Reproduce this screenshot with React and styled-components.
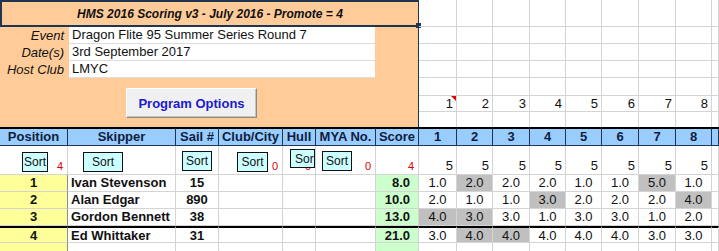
import React from "react";
import styled, { createGlobalStyle } from "styled-components";

const GlobalStyle = createGlobalStyle`
  html, body {
    margin: 0;
    padding: 0;
    background: #fff;
  }
  body {
    font-family: "Liberation Sans", Arial, sans-serif;
    color: #111;
  }
  * {
    box-sizing: border-box;
  }
`;

const COLS =
  "68px 108px 43px 64px 33px 60px 43px 38px 36px 37px 36px 36px 37px 37px 36px 1fr";
const RACE_COLS = "38px 36px 37px 36px 36px 37px 37px 36px 1fr";

const GRID = "#d4d4d4";
const NAVY = "#1f3550";

const Sheet = styled.div`
  width: 719px;
  height: 251px;
  overflow: hidden;
  background: #fff;
`;

const Top = styled.div`
  display: flex;
  height: 127px;
`;

const Panel = styled.div`
  width: 419px;
  flex: none;
  background: #ffcc99;
  border-right: 1px solid ${NAVY};
`;

const Title = styled.div`
  height: 27px;
  border: 2px solid ${NAVY};
  border-right: none;
  display: flex;
  align-items: center;
  justify-content: center;
  font-style: italic;
  font-weight: bold;
  font-size: 12px;
  position: relative;

  &::after {
    content: "";
    position: absolute;
    right: -3px;
    bottom: -3px;
    width: 5px;
    height: 5px;
    background: ${NAVY};
  }
`;

const Info = styled.div`
  display: grid;
  grid-template-columns: 69px 306px;
  grid-auto-rows: 17px;
`;

const Label = styled.div`
  text-align: right;
  padding-right: 5px;
  font-style: italic;
  font-size: 13px;
  line-height: 17px;
`;

const Value = styled.div`
  background: #fff;
  border-bottom: 1px solid #dcdcdc;
  font-size: 13px;
  line-height: 16px;
  padding-left: 3px;
`;

const ButtonRow = styled.div`
  padding: 10px 0 0 126px;
`;

const OptionsButton = styled.button`
  width: 131px;
  height: 30px;
  padding: 0;
  background: #f0f0f0;
  border: 1px solid;
  border-color: #fff #8a8a8a #8a8a8a #fff;
  box-shadow: inset -1px -1px 0 #c4c4c4;
  font-family: "Liberation Sans", Arial, sans-serif;
  font-weight: bold;
  font-size: 13px;
  color: #1a1ad2;
`;

const RightGrid = styled.div`
  flex: 1;
  display: grid;
  grid-template-columns: ${RACE_COLS};
  grid-template-rows: 27px 17px 17px 17px 18px 16px 15px;
`;

const GridCell = styled.div`
  position: relative;
  border-right: 1px solid ${GRID};
  border-bottom: ${(p) => (p.$last ? "none" : `1px solid ${GRID}`)};
  font-size: 13px;
  line-height: 16px;
  text-align: right;
  padding-right: 3px;
`;

const CommentMark = styled.span`
  position: absolute;
  top: 0;
  right: 0;
  width: 0;
  height: 0;
  border-top: 5px solid #e00000;
  border-left: 5px solid transparent;
`;

const Table = styled.div`
  display: grid;
  grid-template-columns: ${COLS};
  grid-template-rows: 19px 29px 17px 17px 17px 17px 17px;
`;

const HeadCell = styled.div`
  background: #99ccff;
  border-top: 2px solid #000;
  border-bottom: 1px solid ${NAVY};
  border-right: 1px solid ${NAVY};
  color: #0f1d3d;
  font-weight: bold;
  font-size: 13px;
  line-height: 16px;
  text-align: center;
  white-space: nowrap;
  overflow: hidden;
`;

const SortCell = styled.div`
  position: relative;
  display: flex;
  justify-content: flex-end;
  align-items: flex-end;
  padding: 0 ${(p) => (p.$race ? 3 : 4)}px 1px 0;
  border-right: 1px solid ${GRID};
  border-bottom: 1px solid ${GRID};
  font-size: 13px;
`;

const Count = styled.span`
  color: #e00000;
  font-size: 11px;
  line-height: 13px;
`;

const SortButton = styled.div`
  position: absolute;
  left: ${(p) => p.$left}px;
  top: ${(p) => p.$top}px;
  width: ${(p) => p.$w}px;
  height: ${(p) => p.$h}px;
  background: #ccffff;
  border: 1px solid #111;
  display: flex;
  align-items: center;
  justify-content: ${(p) => (p.$clip ? "flex-start" : "center")};
  padding-left: ${(p) => (p.$clip ? 4 : 0)}px;
  overflow: hidden;
  white-space: nowrap;
  font-size: 12px;
  color: #111;
`;

const tones = {
  yellow: "#ffff99",
  green: "#ccffcc",
  gray: "#c0c0c0",
  white: "#fff",
};

const DataCell = styled.div`
  background: ${(p) => tones[p.$tone || "white"]};
  border-right: 1px solid ${(p) => p.$edge || GRID};
  border-bottom: 1px solid ${GRID};
  border-top: ${(p) => (p.$thick ? "2px solid #000" : "none")};
  font-size: 13px;
  line-height: 16px;
  font-weight: ${(p) => (p.$bold ? "bold" : "normal")};
  text-align: ${(p) => p.$align || "center"};
  padding: ${(p) => p.$pad || "0"};
  white-space: nowrap;
  overflow: hidden;
`;

const headers = [
  "Position",
  "Skipper",
  "Sail #",
  "Club/City",
  "Hull",
  "MYA No.",
  "Score",
  "1",
  "2",
  "3",
  "4",
  "5",
  "6",
  "7",
  "8",
  "",
];

const sortRow = [
  { btn: { left: 22, top: 6, w: 26, h: 20 }, count: "4" },
  { btn: { left: 15, top: 6, w: 40, h: 20 } },
  { btn: { left: 6, top: 5, w: 30, h: 20 } },
  { btn: { left: 18, top: 6, w: 31, h: 20 }, count: "0" },
  { btn: { left: 7, top: 3, w: 25, h: 19, clip: true }, count: "0" },
  { btn: { left: 6, top: 5, w: 30, h: 20 }, count: "0" },
  { count: "4" },
];

const results = [
  {
    pos: 1,
    name: "Ivan  Stevenson",
    sail: "15",
    score: "8.0",
    races: ["1.0", "2.0*", "2.0", "2.0", "1.0", "1.0", "5.0*", "1.0"],
  },
  {
    pos: 2,
    name: "Alan Edgar",
    sail: "890",
    score: "10.0",
    races: ["2.0", "1.0", "1.0", "3.0*", "2.0", "2.0", "2.0", "4.0*"],
  },
  {
    pos: 3,
    name: "Gordon Bennett",
    sail: "38",
    score: "13.0",
    races: ["4.0*", "3.0*", "3.0", "1.0", "3.0", "3.0", "1.0", "2.0"],
  },
  {
    pos: 4,
    name: "Ed Whittaker",
    sail: "31",
    score: "21.0",
    races: ["3.0", "4.0*", "4.0*", "4.0", "4.0", "4.0", "3.0", "3.0"],
  },
];

const topRowHeights = 7;

const ResultRow = ({ row, thick }) => (
  <>
    <DataCell $tone="yellow" $bold $edge="#8c8c8c" $thick={thick}>
      {row ? row.pos : ""}
    </DataCell>
    <DataCell $bold $align="left" $pad="0 0 0 3px" $thick={thick}>
      {row ? row.name : ""}
    </DataCell>
    <DataCell $bold $thick={thick}>
      {row ? row.sail : ""}
    </DataCell>
    <DataCell $thick={thick} />
    <DataCell $thick={thick} />
    <DataCell $thick={thick} />
    <DataCell $tone="green" $bold $align="right" $pad="0 8px 0 0" $thick={thick}>
      {row ? row.score : ""}
    </DataCell>
    {Array.from({ length: 8 }, (_, i) => {
      const v = row ? row.races[i] : "";
      const dropped = v.endsWith("*");
      return (
        <DataCell key={i} $tone={dropped ? "gray" : "white"} $thick={thick}>
          {v.replace("*", "")}
        </DataCell>
      );
    })}
    <DataCell $thick={thick} />
  </>
);

export default function App() {
  return (
    <Sheet>
      <GlobalStyle />
      <Top>
        <Panel>
          <Title>HMS 2016 Scoring v3 - July 2016 - Promote = 4</Title>
          <Info>
            <Label>Event</Label>
            <Value>Dragon Flite 95 Summer Series Round 7</Value>
            <Label>Date(s)</Label>
            <Value>3rd September 2017</Value>
            <Label>Host Club</Label>
            <Value>LMYC</Value>
          </Info>
          <ButtonRow>
            <OptionsButton>Program Options</OptionsButton>
          </ButtonRow>
        </Panel>
        <RightGrid>
          {Array.from({ length: topRowHeights }, (_, r) =>
            Array.from({ length: 9 }, (_, c) => (
              <GridCell key={`${r}-${c}`} $last={r === topRowHeights - 1}>
                {r === 5 && c < 8 ? c + 1 : ""}
                {r === 5 && c === 0 && <CommentMark />}
              </GridCell>
            ))
          )}
        </RightGrid>
      </Top>
      <Table>
        {headers.map((h, i) => (
          <HeadCell key={i}>{h}</HeadCell>
        ))}
        {sortRow.map((s, i) => (
          <SortCell key={i}>
            {s.btn && (
              <SortButton
                $left={s.btn.left}
                $top={s.btn.top}
                $w={s.btn.w}
                $h={s.btn.h}
                $clip={s.btn.clip}
              >
                Sort
              </SortButton>
            )}
            {s.count && <Count>{s.count}</Count>}
          </SortCell>
        ))}
        {Array.from({ length: 9 }, (_, i) => (
          <SortCell key={`r${i}`} $race>
            {i < 8 ? "5" : ""}
          </SortCell>
        ))}
        {results.map((r, i) => (
          <ResultRow key={r.pos} row={r} thick={i === 3} />
        ))}
        <ResultRow />
      </Table>
    </Sheet>
  );
}
